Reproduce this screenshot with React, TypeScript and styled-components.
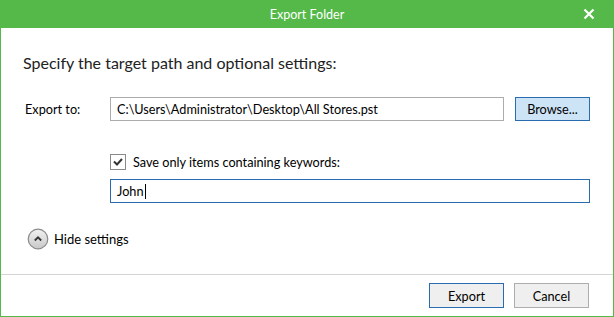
import React from 'react';
import styled, { createGlobalStyle } from 'styled-components';

const GlobalStyle = createGlobalStyle`
  html, body {
    margin: 0;
    padding: 0;
    background: #ffffff;
  }
  * {
    box-sizing: border-box;
  }
`;

const Window = styled.div`
  width: 614px;
  height: 317px;
  border: 1px solid #54b948;
  border-top: none;
  display: flex;
  flex-direction: column;
  font-family: Lato, 'Open Sans', sans-serif;
  font-size: 12.7px;
  color: #000;
  background: #fff;
`;

const TitleBar = styled.div`
  height: 28px;
  margin: 0 -1px;
  background: #54b948;
  color: #fff;
  display: flex;
  align-items: center;
  justify-content: center;
  position: relative;
  font-size: 12.5px;
`;

const CloseButton = styled.div`
  position: absolute;
  right: 18px;
  top: 7px;
  width: 14px;
  height: 14px;
  display: flex;
  align-items: center;
  justify-content: center;
`;

const Body = styled.div`
  flex: 1;
  display: flex;
  flex-direction: column;
  padding: 24px 23px 0 22px;
`;

const Heading = styled.div`
  font-size: 16px;
  line-height: 22px;
  color: #222;
`;

const PathRow = styled.div`
  margin-top: 23px;
  padding-left: 2px;
  display: grid;
  grid-template-columns: 74px 1fr 75px;
  column-gap: 11px;
  align-items: center;
`;

const Label = styled.span`
  line-height: 24px;
`;

const TextBox = styled.div<{ focused?: boolean }>`
  height: 24px;
  border: 1px solid ${({ focused }) => (focused ? '#2a6cb0' : '#acacac')};
  display: flex;
  align-items: center;
  padding: 0 6px;
  white-space: nowrap;
  overflow: hidden;
`;

const Button = styled.button<{ primary?: boolean; hover?: boolean }>`
  height: ${({ hover }) => (hover ? '24px' : '25px')};
  width: 75px;
  font: inherit;
  color: #000;
  padding: 0;
  background: ${({ hover }) => (hover ? '#cde4f7' : '#efefef')};
  border: 1px solid ${({ primary, hover }) => (primary || hover ? '#2a6cb0' : '#adadad')};
`;

const Options = styled.div`
  margin-left: 87px;
  margin-top: 32px;
  display: flex;
  flex-direction: column;
  gap: 8px;
`;

const CheckRow = styled.label`
  display: flex;
  align-items: center;
  gap: 7px;
  height: 18px;
`;

const CheckBox = styled.span`
  width: 16px;
  height: 16px;
  border: 1px solid #8a8a8a;
  display: flex;
  align-items: center;
  justify-content: center;
`;

const Caret = styled.span`
  display: inline-block;
  width: 1px;
  height: 15px;
  background: #000;
  margin-left: 1px;
`;

const Toggle = styled.div`
  margin-top: 25px;
  margin-left: 4px;
  display: flex;
  align-items: center;
  gap: 5px;
  height: 22px;
  font-size: 13px;
`;

const Footer = styled.div`
  height: 42px;
  border-top: 1px solid #d4d4d4;
  display: flex;
  justify-content: flex-end;
  align-items: flex-start;
  gap: 10px;
  padding: 8px 24px 0 0;
`;

function App() {
  return (
    <>
      <GlobalStyle />
      <Window>
        <TitleBar>
          Export Folder
          <CloseButton>
            <svg width="12" height="12" viewBox="0 0 12 12">
              <path d="M1.5 1.5 L10.5 10.5 M10.5 1.5 L1.5 10.5" stroke="#fff" strokeWidth="2.2" />
            </svg>
          </CloseButton>
        </TitleBar>
        <Body>
          <Heading>Specify the target path and optional settings:</Heading>
          <PathRow>
            <Label>Export to:</Label>
            <TextBox>C:\Users\Administrator\Desktop\All Stores.pst</TextBox>
            <Button hover>Browse...</Button>
          </PathRow>
          <Options>
            <CheckRow>
              <CheckBox>
                <svg width="10" height="8" viewBox="0 0 10 8">
                  <path d="M1 3.5 L4 6.5 L9 1" stroke="#333" strokeWidth="2" fill="none" />
                </svg>
              </CheckBox>
              Save only items containing keywords:
            </CheckRow>
            <TextBox focused>
              John
              <Caret />
            </TextBox>
          </Options>
          <Toggle>
            <svg width="22" height="22" viewBox="0 0 22 22">
              <defs>
                <linearGradient id="circ" x1="0" y1="0" x2="0" y2="1">
                  <stop offset="0" stopColor="#f2f2f2" />
                  <stop offset="1" stopColor="#c8c8c8" />
                </linearGradient>
              </defs>
              <circle cx="11" cy="11" r="9.8" fill="url(#circ)" stroke="#8a8a8a" strokeWidth="1.2" />
              <path d="M7.8 12.5 L11 9.3 L14.2 12.5" stroke="#333" strokeWidth="1.8" fill="none" />
            </svg>
            Hide settings
          </Toggle>
        </Body>
        <Footer>
          <Button primary>Export</Button>
          <Button>Cancel</Button>
        </Footer>
      </Window>
    </>
  );
}

export default App;
